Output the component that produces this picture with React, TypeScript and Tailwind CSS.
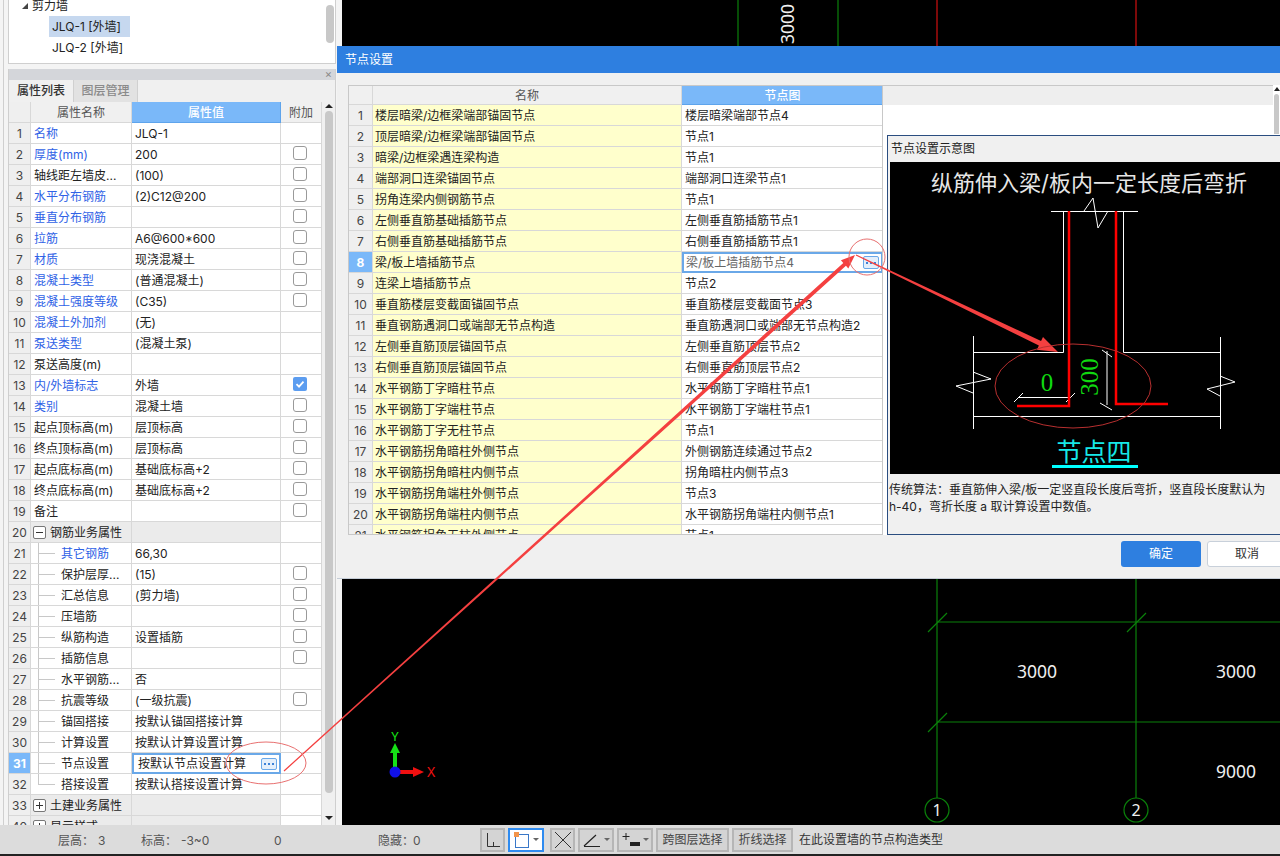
const blue = "text-[#2f62e6]";

type PropRow = {
	n: number;
	name: string;
	value?: string;
	link?: boolean;
	check?: boolean;
	checked?: boolean;
	child?: boolean;
	last?: boolean;
	section?: "open" | "closed";
	editing?: boolean;
};

const propRows: PropRow[] = [
	{ n: 1, name: "名称", value: "JLQ-1", link: true },
	{ n: 2, name: "厚度(mm)", value: "200", link: true, check: true },
	{ n: 3, name: "轴线距左墙皮...", value: "(100)", check: true },
	{ n: 4, name: "水平分布钢筋", value: "(2)C12@200", link: true, check: true },
	{ n: 5, name: "垂直分布钢筋", link: true, check: true },
	{ n: 6, name: "拉筋", value: "A6@600*600", link: true, check: true },
	{ n: 7, name: "材质", value: "现浇混凝土", link: true, check: true },
	{ n: 8, name: "混凝土类型", value: "(普通混凝土)", link: true, check: true },
	{ n: 9, name: "混凝土强度等级", value: "(C35)", link: true, check: true },
	{ n: 10, name: "混凝土外加剂", value: "(无)", link: true },
	{ n: 11, name: "泵送类型", value: "(混凝土泵)", link: true },
	{ n: 12, name: "泵送高度(m)" },
	{ n: 13, name: "内/外墙标志", value: "外墙", link: true, check: true, checked: true },
	{ n: 14, name: "类别", value: "混凝土墙", link: true, check: true },
	{ n: 15, name: "起点顶标高(m)", value: "层顶标高", check: true },
	{ n: 16, name: "终点顶标高(m)", value: "层顶标高", check: true },
	{ n: 17, name: "起点底标高(m)", value: "基础底标高+2", check: true },
	{ n: 18, name: "终点底标高(m)", value: "基础底标高+2", check: true },
	{ n: 19, name: "备注", check: true },
	{ n: 20, name: "钢筋业务属性", section: "open" },
	{ n: 21, name: "其它钢筋", value: "66,30", link: true, child: true },
	{ n: 22, name: "保护层厚...", value: "(15)", child: true, check: true },
	{ n: 23, name: "汇总信息", value: "(剪力墙)", child: true, check: true },
	{ n: 24, name: "压墙筋", child: true, check: true },
	{ n: 25, name: "纵筋构造", value: "设置插筋", child: true, check: true },
	{ n: 26, name: "插筋信息", child: true, check: true },
	{ n: 27, name: "水平钢筋...", value: "否", child: true },
	{ n: 28, name: "抗震等级", value: "(一级抗震)", child: true, check: true },
	{ n: 29, name: "锚固搭接", value: "按默认锚固搭接计算", child: true },
	{ n: 30, name: "计算设置", value: "按默认计算设置计算", child: true },
	{ n: 31, name: "节点设置", value: "按默认节点设置计算", child: true, editing: true },
	{ n: 32, name: "搭接设置", value: "按默认搭接设置计算", child: true, last: true },
	{ n: 33, name: "土建业务属性", section: "closed" },
	{ n: 40, name: "显示样式", section: "closed" },
];

const nodeRows = [
	["楼层暗梁/边框梁端部锚固节点", "楼层暗梁端部节点4"],
	["顶层暗梁/边框梁端部锚固节点", "节点1"],
	["暗梁/边框梁遇连梁构造", "节点1"],
	["端部洞口连梁锚固节点", "端部洞口连梁节点1"],
	["拐角连梁内侧钢筋节点", "节点1"],
	["左侧垂直筋基础插筋节点", "左侧垂直筋插筋节点1"],
	["右侧垂直筋基础插筋节点", "右侧垂直筋插筋节点1"],
	["梁/板上墙插筋节点", "梁/板上墙插筋节点4"],
	["连梁上墙插筋节点", "节点2"],
	["垂直筋楼层变截面锚固节点", "垂直筋楼层变截面节点3"],
	["垂直钢筋遇洞口或端部无节点构造", "垂直筋遇洞口或端部无节点构造2"],
	["左侧垂直筋顶层锚固节点", "左侧垂直筋顶层节点2"],
	["右侧垂直筋顶层锚固节点", "右侧垂直筋顶层节点2"],
	["水平钢筋丁字暗柱节点", "水平钢筋丁字暗柱节点1"],
	["水平钢筋丁字端柱节点", "水平钢筋丁字端柱节点1"],
	["水平钢筋丁字无柱节点", "节点1"],
	["水平钢筋拐角暗柱外侧节点", "外侧钢筋连续通过节点2"],
	["水平钢筋拐角暗柱内侧节点", "拐角暗柱内侧节点3"],
	["水平钢筋拐角端柱外侧节点", "节点3"],
	["水平钢筋拐角端柱内侧节点", "水平钢筋拐角端柱内侧节点1"],
	["水平钢筋拐角无柱外侧节点", "节点1"],
];

// tapered annotation arrow, thin at the start and thick at the head
const arrowPoints = (x1: number, y1: number, x2: number, y2: number, w1: number, w2: number, headLen: number, headW: number) => {
	const len = Math.hypot(x2 - x1, y2 - y1);
	const ux = (x2 - x1) / len;
	const uy = (y2 - y1) / len;
	const px = -uy;
	const py = ux;
	const bx = x2 - ux * headLen;
	const by = y2 - uy * headLen;
	return [
		[x1 + (px * w1) / 2, y1 + (py * w1) / 2],
		[bx + (px * w2) / 2, by + (py * w2) / 2],
		[bx + (px * headW) / 2, by + (py * headW) / 2],
		[x2, y2],
		[bx - (px * headW) / 2, by - (py * headW) / 2],
		[bx - (px * w2) / 2, by - (py * w2) / 2],
		[x1 - (px * w1) / 2, y1 - (py * w1) / 2],
	]
		.map((p) => p.join(","))
		.join(" ");
};

const DotsButton = ({ className }: { className: string }) => (
	<span className={`flex items-center justify-center gap-[2px] rounded-[2px] border border-[#6aa8e8] bg-[#e4effb] ${className}`}>
		<span className="h-[2px] w-[2px] bg-[#3c82d8]" />
		<span className="h-[2px] w-[2px] bg-[#3c82d8]" />
		<span className="h-[2px] w-[2px] bg-[#3c82d8]" />
	</span>
);

const Checkbox = ({ checked }: { checked?: boolean }) =>
	checked ? (
		<span className="flex h-[14px] w-[14px] items-center justify-center rounded-[2px] bg-[#5c9df0]">
			<svg width="10" height="10" viewBox="0 0 10 10">
				<path d="M1.5 5.2 4 7.6 8.5 2.6" fill="none" stroke="#fff" strokeWidth="1.8" />
			</svg>
		</span>
	) : (
		<span className="h-[14px] w-[14px] rounded-[3px] border border-[#9a9a9a] bg-white" />
	);

const TreeBox = ({ open }: { open: boolean }) => (
	<span className="relative mx-[2px] -mt-[2px] flex h-[13px] w-[13px] shrink-0 items-center justify-center rounded-[2px] border border-[#777] bg-white">
		<span className="h-px w-[7px] bg-[#333]" />
		{!open && <span className="absolute h-[7px] w-px bg-[#333]" />}
	</span>
);

const PropertyRow = ({ row }: { row: PropRow }) => {
	const cell = "flex h-[21px] items-center overflow-hidden border-r border-b border-[#d8d8d8]";
	return (
		<>
			<div className={`${cell} justify-center pt-[2px] ${row.editing ? "bg-[#7ab8f9] font-bold text-white" : "bg-[#efefef] text-[#444]"}`}>
				{row.n}
			</div>
			<div className={`${cell} pt-[2px] ${row.section ? "bg-[#ebebeb] text-[#222]" : row.child ? "bg-white" : "bg-white pl-[3px]"} ${row.link ? blue : "text-[#222]"}`}>
				{row.section && <TreeBox open={row.section === "open"} />}
				{row.section && <span className="ml-[2px]">{row.name}</span>}
				{row.child && (
					<span className={`-mt-[2px] ml-[7px] mr-[6px] flex w-[17px] shrink-0 border-l border-[#c8c8c8] ${row.last ? "h-[11px] items-end self-start" : "h-[21px] items-center"}`}>
						<span className="h-px w-full bg-[#c8c8c8]" />
					</span>
				)}
				{!row.section && row.name}
			</div>
			{row.editing ? (
				<div className="flex h-[21px] items-center justify-between border-2 border-[#6aa8e8] bg-white pl-[4px] pr-[2px] text-[#222]">
					{row.value}
					<DotsButton className="h-[12px] w-[16px]" />
				</div>
			) : (
				<div className={`${cell} pl-[3px] pt-[2px] text-[#222] ${row.section ? "bg-[#ebebeb]" : "bg-white"}`}>{row.value}</div>
			)}
			<div className={`${cell} justify-center bg-white pb-[2px] pr-[2px]`}>{row.check && <Checkbox checked={row.checked} />}</div>
		</>
	);
};

const Sidebar = () => (
	<aside className="h-[825px] w-[342px] shrink-0 overflow-hidden bg-[#f4f4f4] pl-[3px]">
		<div className="h-full border-l border-[#cfcfcf] pl-[4px]">
			{/* component tree */}
			<div className="flex h-[64px] w-[328px] overflow-hidden border border-t-0 border-[#cfcfcf] bg-white">
				<div className="flex-1 text-[#222]">
					<div className="-mt-[5px] flex h-[21px] items-center pl-[13px]">
						<span className="mr-[4px] h-0 w-0 border-b-[6px] border-l-[6px] border-b-[#444] border-l-transparent" />
						{"剪力墙"}
					</div>
					<div className="ml-[40px] flex h-[21px] w-[81px] items-center bg-[#c6d8ef] pl-[3px]">JLQ-1 [外墙]</div>
					<div className="ml-[40px] flex h-[21px] items-center pl-[3px]">JLQ-2 [外墙]</div>
				</div>
				<div className="mr-[1px] mt-[5px] h-[38px] w-[8px] rounded-full bg-[#c8c8c8]" />
			</div>

			{/* property panel */}
			<div className="mt-[5px] w-[328px] border-x border-[#cfcfcf] bg-[#f0f0f0]">
				<div className="flex h-[11px] items-center justify-end bg-[#d4d6da] pr-[3px] text-[11px] leading-none text-[#888]">×</div>
				<div className="flex h-[22px] items-stretch">
					<div className="flex w-[64px] items-center justify-center bg-[#f0f0f0] font-medium text-[#333]">属性列表</div>
					<div className="flex w-[65px] items-center justify-center border-x border-[#d0d0d0] bg-[#e2e2e2] font-medium text-[#8a8a8a]">图层管理</div>
				</div>
				<div className="flex">
					<div className="grid w-[313px] grid-cols-[22px_101px_149px_41px]">
						<div className="h-[21px] border-r border-b border-[#d8d8d8] bg-[#efefef]" />
						<div className="flex h-[21px] items-center justify-center border-r border-b border-[#d8d8d8] bg-[#f0f0f0] pt-[2px] text-[#555]">属性名称</div>
						<div className="flex h-[21px] items-center justify-center border-r border-b border-[#5ea4ec] bg-[#7ab8f9] pt-[2px] font-medium text-white">属性值</div>
						<div className="flex h-[21px] items-center justify-center border-r border-b border-[#d8d8d8] bg-[#f0f0f0] pt-[2px] text-[#555]">附加</div>
						{propRows.map((row) => (
							<PropertyRow key={row.n} row={row} />
						))}
					</div>
					<div className="flex h-[723px] w-[13px] flex-col items-center pt-[2px]">
						<span className="h-0 w-0 border-x-[4px] border-b-[4px] border-x-transparent border-b-[#222]" />
						<span className="mt-[3px] h-[682px] w-[8px] rounded-full bg-[#c8c8c8]" />
						<span className="mt-[23px] h-0 w-0 border-x-[4px] border-t-[4px] border-x-transparent border-t-[#222]" />
					</div>
				</div>
			</div>
		</div>
	</aside>
);

const CadCanvas = () => (
	<main className="relative h-[825px] flex-1 bg-black">
		<svg className="block font-['Noto_Sans',sans-serif]" width="938" height="825" viewBox="342 0 938 825">
			<g stroke="#0a800a" strokeWidth="1.2" fill="none">
				<path d="M738 0V46M838 0V46" />
				<path d="M937 578V798M1136 578V798" />
				<path d="M937 622H1280M937 722H1280" />
				<path d="M928 632 947 613M1127 632 1146 613M928 732 947 713" />
				<circle cx="937" cy="810" r="12" />
				<circle cx="1136" cy="810" r="12" />
			</g>
			<path d="M937 0V46M1136 0V46" stroke="#d01010" strokeWidth="1.2" />
			<g fill="#f0f0f0" fontSize="17.5" textAnchor="middle">
				<text x="794" y="24" transform="rotate(-90 794 24)">3000</text>
				<text x="1037" y="678">3000</text>
				<text x="1236" y="678">3000</text>
				<text x="1236" y="778">9000</text>
				<text x="937" y="816" fontSize="16">1</text>
				<text x="1136" y="816" fontSize="16">2</text>
			</g>
			{/* coordinate axes */}
			<rect x="393" y="752" width="4" height="20" fill="#16e016" />
			<path d="M395 743 400 753H390Z" fill="#16e016" />
			<rect x="398" y="770" width="16" height="4" fill="#f01010" />
			<path d="M424 772 413 767V777Z" fill="#f01010" />
			<circle cx="395" cy="772" r="5.5" fill="#1010e8" />
			<text x="395" y="741" fontSize="13" fill="#16e016" textAnchor="middle">Y</text>
			<text x="431" y="777" fontSize="14" fill="#f01010" textAnchor="middle">X</text>
		</svg>
	</main>
);

const NodePreview = () => (
	<svg className="block" width="390" height="312" viewBox="890 162 390 312">
		<rect x="890" y="162" width="390" height="312" fill="#000" />
		<text x="931" y="191" fontSize="22" fill="#e6e6e6">纵筋伸入梁/板内一定长度后弯折</text>
		<g stroke="#fff" strokeWidth="1" fill="none">
			<path d="M1051 211.5H1138" />
			<path d="M1084 211 1093 198 1098 228 1108 211" />
			<path d="M1063.5 211V352.5H973M1123.5 211V352.5H1220" />
			<path d="M973.5 336V429M1220.5 337V429M973 416.5H1220" />
			<path d="M973 372 991 379 956 386 973 393M1220 376 1235 382 1207 389 1220 396" />
			<path d="M1018 397.5H1070M1014 402 1023 393M1066 402 1075 393" />
			<path d="M1107 351V405M1102 350 1112 357M1100 403 1112 410" />
		</g>
		<g stroke="#ff0000" strokeWidth="2.5" fill="none">
			<path d="M1069 211V406H1017" />
			<path d="M1116 211V404H1168" />
		</g>
		<g className="font-['Liberation_Serif',serif]" fill="#10d810" fontSize="25" textAnchor="middle">
			<text x="1047" y="391">0</text>
			<text x="1098" y="377" transform="rotate(-90 1098 377)">300</text>
		</g>
		<text x="1094" y="461" fontSize="25" fill="#16e8e8" textAnchor="middle">节点四</text>
		<rect x="1052" y="465" width="86" height="3" fill="#00ffff" />
	</svg>
);

const NodeDialog = () => (
	<section className="absolute left-[337px] top-[46px] h-[533px] w-[943px] overflow-hidden border-b border-[#c4ccd6] bg-[#f0f0f0]">
		<div className="flex h-[27px] items-center bg-[#2e7fe0] pl-[8px] text-white">节点设置</div>
		<div className="flex h-[462px] pl-[11px] pt-[12px]">
			<div className="h-[450px] w-[535px] shrink-0 overflow-hidden border border-[#c8c8c8]">
				<div className="grid grid-cols-[24px_309px_201px]">
					<div className="h-[19px] border-r border-b border-[#d8d8d8] bg-[#f0f0f0]" />
					<div className="flex h-[19px] items-center justify-center border-r border-b border-[#d8d8d8] bg-[#f0f0f0] pt-[2px] text-[#555]">名称</div>
					<div className="flex h-[19px] items-center justify-center border-b border-[#5ea4ec] bg-[#7ab8f9] pt-[2px] font-medium text-white">节点图</div>
					{nodeRows.map(([name, node], i) => (
						<NodeRow key={name} n={i + 1} name={name} node={node} />
					))}
				</div>
			</div>
			<div className="w-[397px] shrink-0 bg-white">
				<div className="flex h-[50px]">
					<div className="h-[20px] w-[390px] border-t border-[#c8c8c8] bg-[#eeeeee]" />
					<div className="flex w-[7px] flex-col items-center">
						<span className="mt-[2px] h-0 w-0 border-x-[3px] border-b-[4px] border-x-transparent border-b-[#222]" />
						<span className="mt-[3px] h-[40px] w-[5px] rounded-t-full bg-[#c8c8c8]" />
					</div>
				</div>
				<div className="ml-[4px] h-[400px] border-y border-l border-[#2a4d80] bg-[#f0f0f0] pl-[2px]">
					<div className="flex h-[26px] items-center pl-[1px] text-[#222]">节点设置示意图</div>
					<NodePreview />
					<p className="-ml-[1px] w-[392px] pt-[7px] leading-[17px] text-[#222]">
						传统算法：垂直筋伸入梁/板一定竖直段长度后弯折，竖直段长度默认为
						<br />
						h-40，弯折长度 a 取计算设置中数值。
					</p>
				</div>
			</div>
		</div>
		<div className="flex gap-[6px] pl-[784px] pt-[6px]">
			<button className="h-[26px] w-[80px] shrink-0 rounded-[3px] bg-[#2e7fe0] text-xs text-white">确定</button>
			<button className="h-[26px] w-[80px] shrink-0 rounded-[3px] border border-[#c8d0da] bg-white text-xs text-[#333]">取消</button>
		</div>
	</section>
);

const NodeRow = ({ n, name, node }: { n: number; name: string; node: string }) => {
	const editing = n === 8;
	const cell = "flex h-[21px] items-center border-b border-[#d8d8d8] pt-[2px]";
	return (
		<>
			<div className={`${cell} justify-center border-r ${editing ? "bg-[#7ab8f9] font-bold text-white" : "bg-[#efefef] text-[#444]"}`}>{n}</div>
			<div className={`${cell} border-r bg-[#ffffcc] pl-[2px] text-[#222]`}>{name}</div>
			{editing ? (
				<div className="flex h-[21px] items-center justify-between border-2 border-[#6aa8e8] bg-white pl-[2px] pr-[2px] text-[#666]">
					{node}
					<DotsButton className="h-[13px] w-[16px]" />
				</div>
			) : (
				<div className={`${cell} bg-white pl-[3px] text-[#222]`}>{node}</div>
			)}
		</>
	);
};

const ToolButton = ({ width, active, menu, children }: { width: string; active?: boolean; menu?: boolean; children: React.ReactNode }) => (
	<span className={`flex h-[24px] items-center justify-center gap-[3px] whitespace-nowrap border-2 ${width} ${active ? "border-[#2e8bf0] bg-white" : "border-[#b6b6b6] bg-[#d4d4d4]"}`}>
		{children}
		{menu && <span className="h-0 w-0 border-x-[3px] border-t-[3px] border-x-transparent border-t-[#666]" />}
	</span>
);

const StatusBar = () => (
	<footer className="flex h-[31px] items-center whitespace-nowrap border-b-2 border-[#222] bg-[#dcdcdc] text-[#555]">
		<span className="ml-[58px] w-[40px] pt-[2px]">层高：</span>
		<span className="w-[43px] pt-[2px]">3</span>
		<span className="w-[40px] pt-[2px]">标高：</span>
		<span className="w-[93px] pt-[2px]">-3~0</span>
		<span className="w-[104px] pt-[2px]">0</span>
		<span className="w-[35px] pt-[2px]">隐藏：</span>
		<span className="w-[67px] pt-[2px]">0</span>
		<div className="flex items-center text-[#444]">
			<ToolButton width="w-[25px]">
				<svg width="16" height="16" viewBox="0 0 16 16">
					<path d="M2.5 1V14.5H15M8.5 14V10" fill="none" stroke="#333" strokeWidth="1" />
				</svg>
			</ToolButton>
			<span className="w-[3px]" />
			<ToolButton width="w-[36px]" active menu>
				<svg width="16" height="18" viewBox="0 0 16 18">
					<rect x="1.5" y="3.5" width="13" height="13" fill="none" stroke="#3a78c8" />
					<rect x="0" y="1" width="5" height="5" fill="#f2944a" />
				</svg>
			</ToolButton>
			<span className="w-[6px]" />
			<ToolButton width="w-[25px]">
				<svg width="18" height="18" viewBox="0 0 18 18">
					<path d="M1 1 17 17M17 1 1 17" stroke="#333" strokeWidth="1" />
				</svg>
			</ToolButton>
			<span className="w-[3px]" />
			<ToolButton width="w-[36px]" menu>
				<svg width="18" height="16" viewBox="0 0 18 16">
					<path d="M1 14 13 3M1 14.5H17" stroke="#222" strokeWidth="1.2" />
				</svg>
			</ToolButton>
			<span className="w-[3px]" />
			<ToolButton width="w-[36px]" menu>
				<svg width="18" height="16" viewBox="0 0 18 16">
					<path d="M4 1V8M0.5 4.5H7.5" stroke="#222" strokeWidth="1" />
					<rect x="8" y="10" width="10" height="4" fill="#222" />
				</svg>
			</ToolButton>
			<span className="w-[3px]" />
			<ToolButton width="w-[73px]">跨图层选择</ToolButton>
			<span className="w-[3px]" />
			<ToolButton width="w-[61px]">折线选择</ToolButton>
			<span className="ml-[6px] text-[#333]">在此设置墙的节点构造类型</span>
		</div>
	</footer>
);

export default function App() {
	return (
		<div className="relative h-[856px] w-[1280px] overflow-hidden bg-white font-['Inter','Noto_Sans_CJK_SC',sans-serif] text-xs">
			<div className="flex">
				<Sidebar />
				<CadCanvas />
			</div>
			<StatusBar />
			<NodeDialog />
			{/* red markup drawn over the screenshot */}
			<svg className="pointer-events-none absolute left-0 top-0" width="1280" height="856" viewBox="0 0 1280 856">
				<polygon points={arrowPoints(284, 771, 855, 255, 1.2, 4, 14, 11)} fill="#f44040" />
				<polygon points={arrowPoints(856, 255, 1058, 352, 1, 5, 20, 14)} fill="#f44040" />
				<g fill="none" strokeWidth="1">
					<ellipse cx="266" cy="763" rx="40" ry="21" stroke="#e87070" />
					<circle cx="867" cy="257" r="18" stroke="#e87070" />
					<ellipse cx="1073" cy="386" rx="78" ry="42" stroke="#b83030" />
				</g>
			</svg>
		</div>
	);
}
